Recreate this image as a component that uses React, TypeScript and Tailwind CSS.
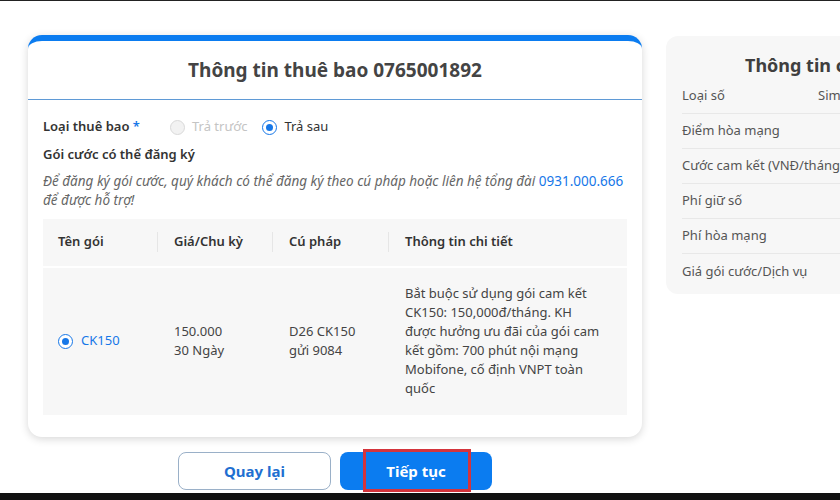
const font = { fontFamily: '"Noto Sans", "Open Sans", sans-serif' };

function Radio({ checked, disabled }: { checked?: boolean; disabled?: boolean }) {
    if (disabled) {
        return <span className="inline-block w-[15px] h-[15px] rounded-full border border-[#d9d9d9] bg-[#f2f2f2]" />;
    }
    return (
        <span className="inline-flex items-center justify-center w-[15px] h-[15px] rounded-full border border-[#1677e8] bg-white">
            {checked && <span className="w-[7px] h-[7px] rounded-full bg-[#1677e8]" />}
        </span>
    );
}

const sideRows = [
    { label: 'Loại số', value: 'Sim' },
    { label: 'Điểm hòa mạng', value: '' },
    { label: 'Cước cam kết (VNĐ/tháng)', value: '' },
    { label: 'Phí giữ số', value: '' },
    { label: 'Phí hòa mạng', value: '' },
    { label: 'Giá gói cước/Dịch vụ', value: '' },
];

export default function App() {
    return (
        <div className="w-[840px] h-[500px] overflow-hidden bg-white flex flex-col text-[#333]" style={font}>
            <div className="h-[1px] bg-[#222] shrink-0" />
            <div className="flex-1 flex gap-[24px] pl-[28px] pt-[34px] overflow-hidden">
                {/* left column */}
                <div className="w-[614px] shrink-0 flex flex-col">
                    <div className="h-[402px] bg-white rounded-[14px] border-t-[6px] border-[#0b7cf0] shadow-[0_2px_8px_rgba(0,0,0,0.16)] flex flex-col">
                        <div className="h-[59px] flex items-center justify-center border-b border-[#5f9ad6]">
                            <h1 className="text-[19px] font-bold text-[#444]">Thông tin thuê bao 0765001892</h1>
                        </div>
                        <div className="px-[15px] pt-[17px] flex flex-col">
                            <div className="flex items-center h-[20px] text-[13px]">
                                <span className="font-semibold text-[#333] w-[127px]">
                                    Loại thuê bao <span className="text-[#1677e8]">*</span>
                                </span>
                                <span className="flex items-center gap-[7px] text-[#c4c4c4]">
                                    <Radio disabled /> Trả trước
                                </span>
                                <span className="flex items-center gap-[7px] ml-[15px] text-[#333]">
                                    <Radio checked /> Trả sau
                                </span>
                            </div>
                            <div className="mt-[8px] text-[13px] font-semibold text-[#333]">Gói cước có thể đăng ký</div>
                            <p className="mt-[7px] text-[13.5px] italic text-[#666] leading-[19px]">
                                Để đăng ký gói cước, quý khách có thể đăng ký theo cú pháp hoặc liên hệ tổng đài{' '}
                                <span className="text-[#1677e8] not-italic">0931.000.666</span>
                                <br />
                                để được hỗ trợ!
                            </p>
                            <div className="mt-[9px] bg-[#f7f7f7] text-[13px] text-[#444]">
                                <div className="flex h-[49px] items-center font-semibold text-[#333] border-b-2 border-white">
                                    <div className="w-[115px] pl-[15px] border-r border-[#e6e6e6]">Tên gói</div>
                                    <div className="w-[115px] pl-[16px] border-r border-[#e6e6e6]">Giá/Chu kỳ</div>
                                    <div className="w-[116px] pl-[16px] border-r border-[#e6e6e6]">Cú pháp</div>
                                    <div className="flex-1 pl-[16px]">Thông tin chi tiết</div>
                                </div>
                                <div className="flex h-[147px] items-center">
                                    <div className="w-[115px] pl-[15px] flex items-center gap-[8px] text-[#1677e8]">
                                        <Radio checked /> CK150
                                    </div>
                                    <div className="w-[115px] pl-[16px] leading-[19px]">150.000<br />30 Ngày</div>
                                    <div className="w-[116px] pl-[16px] leading-[19px]">D26 CK150<br />gửi 9084</div>
                                    <div className="flex-1 pl-[16px] pr-[20px] leading-[19px]">
                                        Bắt buộc sử dụng gói cam kết<br />
                                        CK150: 150,000đ/tháng. KH<br />
                                        được hưởng ưu đãi của gói cam<br />
                                        kết gồm: 700 phút nội mạng<br />
                                        Mobifone, cố định VNPT toàn<br />
                                        quốc
                                    </div>
                                </div>
                            </div>
                        </div>
                    </div>
                    <div className="mt-[15px] flex justify-center gap-[9px]">
                        <button className="w-[153px] h-[38px] rounded-[8px] border border-[#9ab0c8] bg-white text-[#1f6fd1] text-[15px] font-bold">
                            Quay lại
                        </button>
                        <button className="relative w-[152px] h-[38px] rounded-[8px] bg-[#0b7cf0] text-white text-[15px] font-bold">
                            Tiếp tục
                            <span className="absolute left-[23px] top-[-3px] w-[108px] h-[43px] border-[3px] border-[#d4343c]" />
                        </button>
                    </div>
                </div>
                {/* right column */}
                <div className="w-[260px] shrink-0 self-start mt-[1px] h-[258px] bg-[#f7f7f7] rounded-[12px] pl-[16px]">
                    <div className="h-[43px] flex items-end pl-[63px]">
                        <span className="text-[18px] font-bold text-[#3f3f3f] whitespace-nowrap">Thông tin chi tiết</span>
                    </div>
                    <div className="flex flex-col text-[13px] text-[#555]">
                        {sideRows.map((r, i) => (
                            <div key={r.label} className={`flex items-center h-[35px] ${i < sideRows.length - 1 ? 'border-b border-[#e8e8e8]' : ''} ${i === 0 ? 'h-[30px]' : ''}`}>
                                <span className="w-[136px] whitespace-nowrap">{r.label}</span>
                                <span>{r.value}</span>
                            </div>
                        ))}
                    </div>
                </div>
            </div>
            <div className="h-[7px] bg-[#111] shrink-0" />
        </div>
    );
}
